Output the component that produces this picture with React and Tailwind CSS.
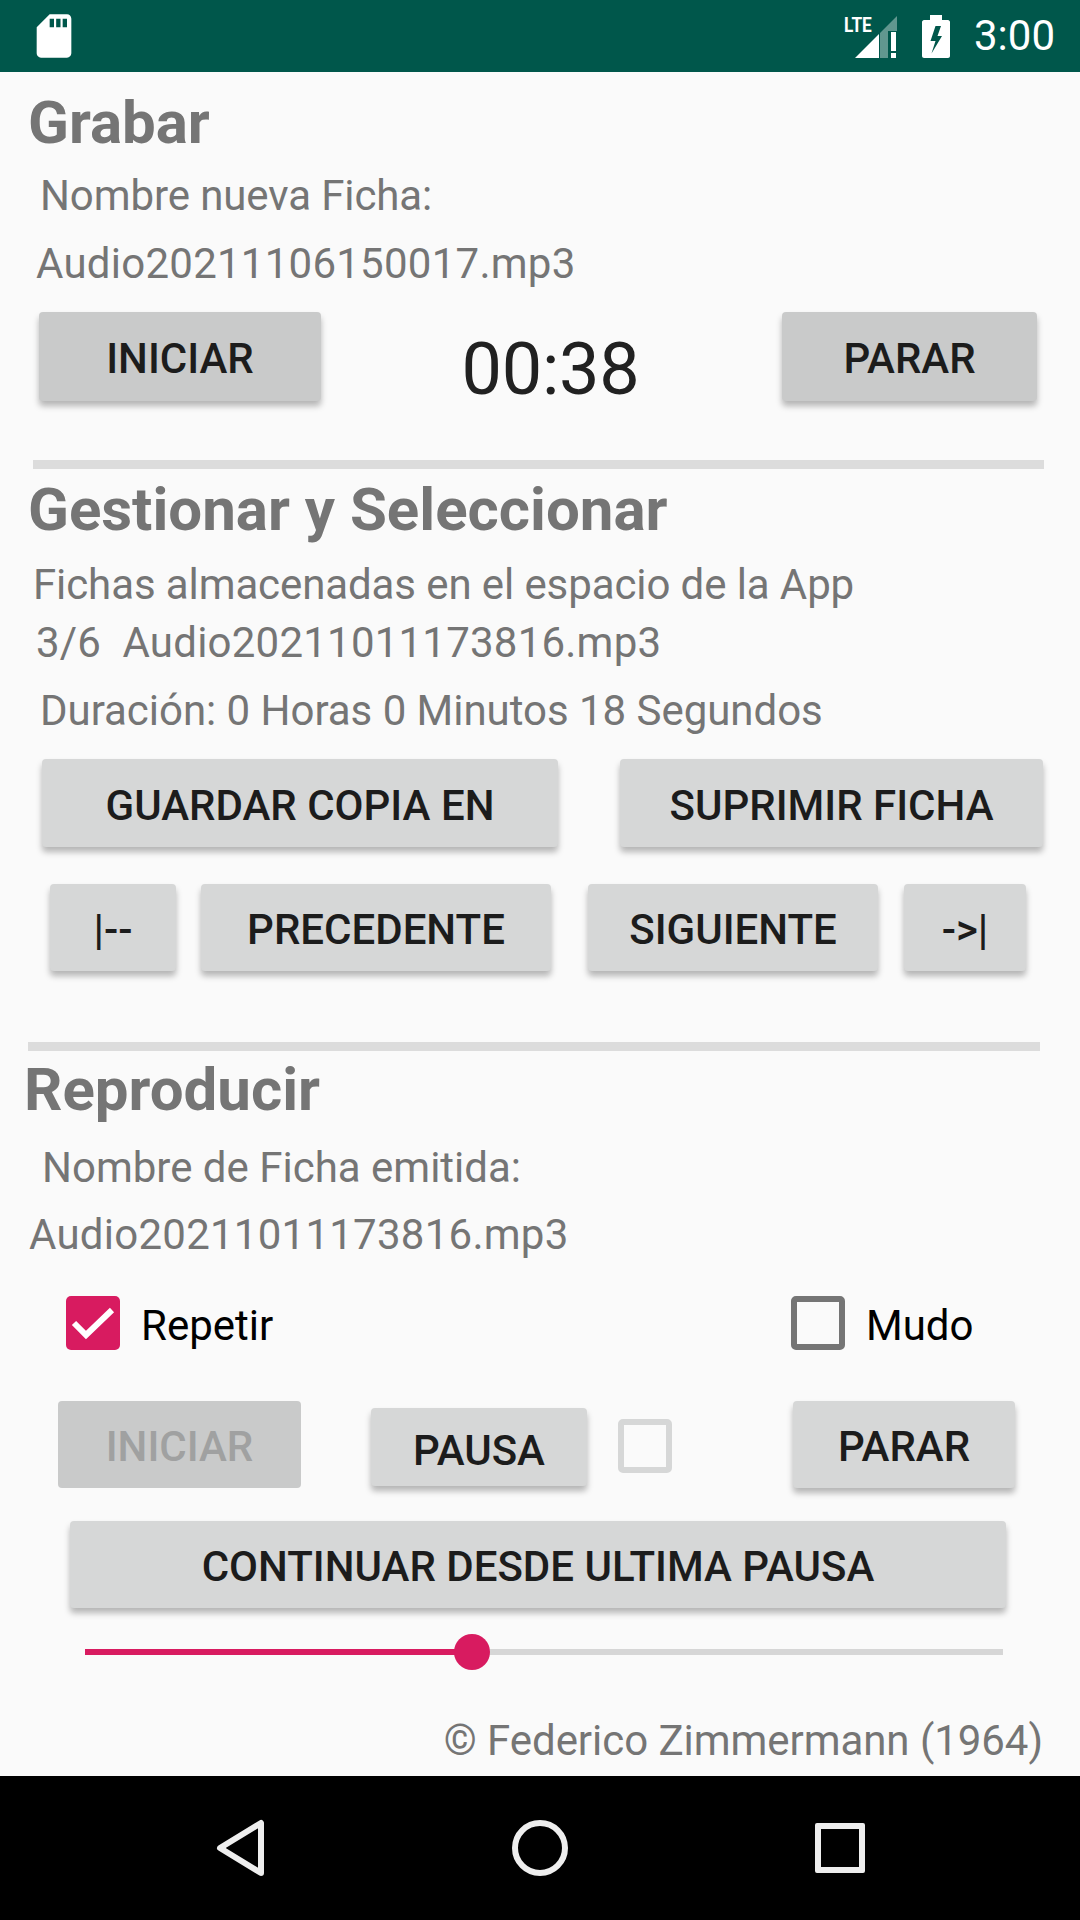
const Btn = ({ className, children }) => (
	<div
		className={`flex items-center justify-center rounded-[4px] text-[#1c1c1c] text-[42px] font-medium shadow-[0_5px_6px_rgba(0,0,0,0.28)] ${className}`}
	>
		{children}
	</div>
);

const Heading = ({ className, children }) => (
	<div className={`text-[#757575] text-[60px] font-bold leading-[60px] ${className}`}>{children}</div>
);

const Label = ({ className, children }) => (
	<div className={`text-[#757575] text-[42px] leading-[50px] whitespace-pre translate-y-[1px] ${className}`}>{children}</div>
);

const StatusBar = () => (
	<div className="h-[72px] shrink-0 bg-[#00574b] flex items-center text-white">
		<svg className="ml-[28px]" width="52" height="52" viewBox="0 0 24 24" fill="#fff">
			<path d="M18 2h-8L4.02 8 4 20c0 1.1.9 2 2 2h12c1.1 0 2-.9 2-2V4c0-1.1-.9-2-2-2zm-6 6h-2V4h2v4zm3 0h-2V4h2v4zm3 0h-2V4h2v4z" />
		</svg>
		<div className="relative ml-auto w-[54px] h-[43px]">
			<svg className="absolute left-0 top-0" width="54" height="43" viewBox="0 0 54 43" fill="#fff">
				<path d="M36 43V18L53 1V16H44V43Z" fillOpacity="0.38" />
				<path d="M11 43L35 19V43Z" />
				<path d="M47 17h5v19h-5z M47 38h5v5h-5z" />
			</svg>
			<div className="absolute left-0 top-[-2px] text-[21px] font-bold leading-[24px] scale-x-[0.82] origin-left">LTE</div>
		</div>
		<svg className="ml-[24px]" width="28" height="43" viewBox="0 0 28 43" fill="#fff">
			<path
				fillRule="evenodd"
				d="M8 0h12v5h6c1 0 2 1 2 2v34c0 1-1 2-2 2H2c-1 0-2-1-2-2V7c0-1 1-2 2-2h6z M13.5 11H19L15.5 21H20L9.5 38.5L13.5 26H8.5Z"
			/>
		</svg>
		<div className="ml-[24px] mr-[25px] text-[42px] leading-[72px]">3:00</div>
	</div>
);

const NavBar = () => (
	<div className="h-[144px] shrink-0 bg-black flex items-start">
		<svg className="ml-[214px] mt-[42px]" width="54" height="60" viewBox="0 0 54 60" fill="none" stroke="#eee" strokeWidth="6" strokeLinejoin="round">
			<path d="M47 5V55L6 30Z" />
		</svg>
		<svg className="ml-[244px] mt-[44px]" width="56" height="56" viewBox="0 0 56 56" fill="none" stroke="#eee" strokeWidth="6">
			<circle cx="28" cy="28" r="25" />
		</svg>
		<div className="ml-[247px] mt-[47px] w-[50px] h-[50px] border-[6px] border-[#eee] rounded-[2px]" />
	</div>
);

const Checkbox = ({ checked }) =>
	checked ? (
		<div className="w-[54px] h-[54px] shrink-0 rounded-[5px] bg-[#d81b60]">
			<svg width="54" height="54" viewBox="0 0 54 54" fill="none" stroke="#fff" strokeWidth="6">
				<path d="M8 27L20 39L46 14" />
			</svg>
		</div>
	) : (
		<div className="w-[54px] h-[54px] shrink-0 rounded-[5px] border-[6px] border-[#757575]" />
	);

export default function App() {
	return (
		<div className="w-[1080px] h-[1920px] bg-[#fafafa] flex flex-col font-['Roboto',sans-serif] overflow-hidden">
			<StatusBar />

			<div className="flex-1 flex flex-col">
				{/* Grabar */}
				<Heading className="ml-[28px] mt-[21px]">Grabar</Heading>
				<Label className="ml-[40px] mt-[17px] mb-[1px] tracking-[-0.1px]">Nombre nueva Ficha:</Label>
				<Label className="ml-[36px] mt-[17px] tracking-[0.25px]">Audio20211106150017.mp3</Label>
				<div className="flex mt-[24px] ml-[39px] items-start">
					<Btn className="w-[282px] h-[89px] pt-[3px] bg-[#c9caca]">INICIAR</Btn>
					<div className="w-[459px] text-center text-[72px] leading-[84px] text-[#212121] mt-[16px] tracking-[-0.3px]">00:38</div>
					<Btn className="w-[255px] h-[89px] ml-[2px] pt-[3px] bg-[#c9caca]">PARAR</Btn>
				</div>
				<div className="ml-[33px] w-[1011px] h-[9px] bg-[#dcdcdc] mt-[48px]" />

				{/* Gestionar y Seleccionar */}
				<Heading className="ml-[28px] mt-[11px]">Gestionar y Seleccionar</Heading>
				<Label className="ml-[33px] mt-[19px] tracking-[-0.1px]">Fichas almacenadas en el espacio de la App</Label>
				<Label className="ml-[36px] mt-[8px] tracking-[0.22px]">3/6  Audio20211011173816.mp3</Label>
				<Label className="ml-[40px] mt-[18px] tracking-[-0.03px]">Duración: 0 Horas 0 Minutos 18 Segundos</Label>
				<div className="flex mt-[24px] ml-[42px] gap-[62px]">
					<Btn className="w-[516px] h-[88px] pt-[4px] bg-[#d6d7d7]">GUARDAR COPIA EN</Btn>
					<Btn className="w-[423px] h-[88px] pt-[4px] bg-[#d6d7d7]">SUPRIMIR FICHA</Btn>
				</div>
				<div className="flex mt-[37px] ml-[50px]">
					<Btn className="w-[126px] h-[87px] pt-[3px] bg-[#d6d7d7]">|--</Btn>
					<Btn className="w-[350px] h-[87px] pt-[3px] ml-[25px] bg-[#d6d7d7]">PRECEDENTE</Btn>
					<Btn className="w-[290px] h-[87px] pt-[3px] ml-[37px] bg-[#d6d7d7]">SIGUIENTE</Btn>
					<Btn className="w-[122px] h-[87px] pt-[3px] ml-[26px] bg-[#d6d7d7]">-&gt;|</Btn>
				</div>
				<div className="ml-[28px] w-[1012px] h-[9px] bg-[#dcdcdc] mt-[71px]" />

				{/* Reproducir */}
				<Heading className="ml-[24px] mt-[9px]">Reproducir</Heading>
				<Label className="ml-[42px] mt-[22px]">Nombre de Ficha emitida:</Label>
				<Label className="ml-[29px] mt-[17px] tracking-[0.25px]">Audio20211011173816.mp3</Label>

				<div className="flex items-center mt-[37px] ml-[66px]">
					<Checkbox checked />
					<div className="ml-[21px] translate-y-[3px] text-[42px] leading-[54px] text-black w-[650px]">Repetir</div>
					<Checkbox />
					<div className="ml-[21px] translate-y-[3px] text-[42px] leading-[54px] text-black">Mudo</div>
				</div>

				<div className="flex items-start mt-[51px] ml-[58px]">
					<div className="w-[243px] h-[87px] pt-[3px] rounded-[4px] bg-[#c9caca] text-[#a0a1a1] text-[42px] font-medium flex items-center justify-center">INICIAR</div>
					<Btn className="w-[216px] h-[78px] ml-[70px] mt-[7px] pt-[6px] bg-[#d6d7d7]">PAUSA</Btn>
					<div className="w-[54px] h-[54px] ml-[31px] mt-[18px] rounded-[5px] border-[6px] border-[#d6d7d7]" />
					<Btn className="w-[222px] h-[87px] pt-[3px] ml-[121px] bg-[#d6d7d7]">PARAR</Btn>
				</div>

				<Btn className="w-[936px] h-[87px] pt-[3px] ml-[70px] mt-[33px] bg-[#d6d7d7]">CONTINUAR DESDE ULTIMA PAUSA</Btn>

				{/* Seek bar */}
				<div className="relative ml-[85px] w-[918px] h-[6px] mt-[41px] bg-[#d6d6d6]">
					<div className="h-full w-[387px] bg-[#d81b60]" />
					<div className="absolute left-[369px] top-[-15px] w-[36px] h-[36px] rounded-full bg-[#d81b60]" />
				</div>

				<div className="text-right mr-[37px] mt-[61px] text-[#757575] text-[42px] leading-[50px] tracking-[-0.05px]">© Federico Zimmermann (1964)</div>
			</div>

			<NavBar />
		</div>
	);
}
